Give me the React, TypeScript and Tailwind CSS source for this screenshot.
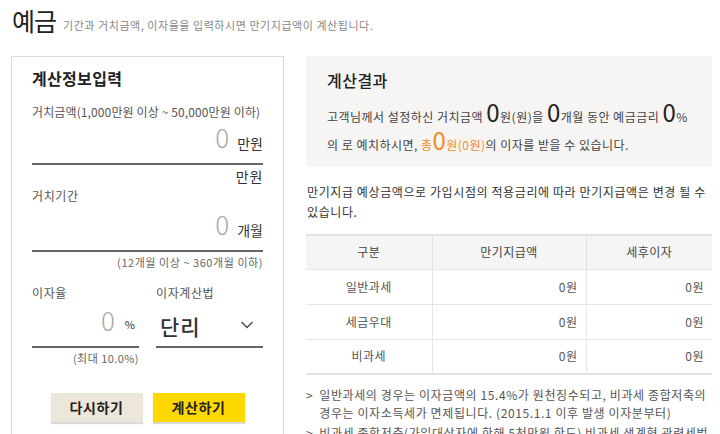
import { ChevronDown } from "lucide-react";

const font = { fontFamily: '"Noto Sans CJK KR", "Noto Sans", sans-serif' };

const rows = [
  { name: "일반과세", total: "0원", interest: "0원" },
  { name: "세금우대", total: "0원", interest: "0원" },
  { name: "비과세", total: "0원", interest: "0원" },
];

function AmountField({ unit, value = "0" }: { unit: string; value?: string }) {
  return (
    <div className="flex h-[45px] items-end justify-end gap-2 border-b-2 border-[#666] pb-[13px]">
      <span className="text-[26px] leading-none font-light text-[#aaa]">{value}</span>
      <span className="text-[14px] leading-none text-[#333]">{unit}</span>
    </div>
  );
}

export default function App() {
  return (
    <main className="min-h-screen bg-white text-[#333]" style={font}>
      <header className="flex items-end gap-[7px] px-[12px] pt-[4px]">
        <h1 className="text-[25px] leading-[32px] font-normal tracking-[-0.04em] text-[#222]">예금</h1>
        <p className="pb-[5px] text-[11px] leading-none tracking-[0.05em] text-[#888]">
          기간과 거치금액, 이자율을 입력하시면 만기지급액이 계산됩니다.
        </p>
      </header>

      <div className="mt-[20px] flex gap-[22px] pl-[11px] pr-[8px]">
        {/* 입력 */}
        <section className="w-[273px] shrink-0 border border-[#ddd] px-[20px] pt-[9px] pb-[20px]">
          <h2 className="text-[16px] leading-[24px] font-bold tracking-[0.02em] text-[#222]">계산정보입력</h2>

          <p className="mt-[14px] whitespace-nowrap text-[12px] leading-[16px] tracking-[0.01em] text-[#555]">
            거치금액(1,000만원 이상 ~ 50,000만원 이하)
          </p>
          <AmountField unit="만원" />
          <p className="mt-[3px] text-right text-[14px] leading-[16px] tracking-[0.05em] text-[#333]">만원</p>

          <p className="mt-[4px] text-[12px] leading-[16px] tracking-[0.05em] text-[#555]">거치기간</p>
          <div className="mt-[3px]">
            <AmountField unit="개월" />
          </div>
          <p className="mt-[3px] text-right text-[11px] leading-[14px] tracking-[0.05em] text-[#666]">
            (12개월 이상 ~ 360개월 이하)
          </p>

          <div className="mt-[16px] grid grid-cols-[107px_107px] justify-between">
            <div>
              <p className="text-[12px] leading-[16px] tracking-[0.05em] text-[#555]">이자율</p>
              <div className="mt-[4px] flex h-[43px] items-end justify-end gap-[10px] border-b-2 border-[#666] pb-[13px] pr-[4px]">
                <span className="text-[26px] leading-none font-light text-[#aaa]">0</span>
                <span className="pb-[3px] text-[11px] leading-none text-[#333]">%</span>
              </div>
              <p className="mt-[3px] text-right text-[11px] leading-[14px] tracking-[0.04em] text-[#666]">(최대 10.0%)</p>
            </div>
            <div>
              <p className="text-[12px] leading-[16px] tracking-[0.05em] text-[#555]">이자계산법</p>
              <div className="mt-[4px] flex h-[43px] items-end justify-between border-b-2 border-[#666] pb-[9px] pl-[4px] pr-[6px]">
                <span className="text-[21px] leading-none font-medium tracking-[0.04em] text-[#333]">단리</span>
                <ChevronDown className="mb-[2px] h-[20px] w-[20px] text-[#555]" strokeWidth={2} />
              </div>
            </div>
          </div>

          <div className="mt-[28px] flex justify-center gap-[10px]">
            <button className="h-[29px] w-[92px] bg-[#ede6da] text-[14px] font-bold tracking-[0.04em] text-[#222] shadow-[0_2px_1px_rgba(0,0,0,0.15)]">
              다시하기
            </button>
            <button className="h-[29px] w-[92px] bg-[#ffd800] text-[14px] font-bold tracking-[0.04em] text-[#222] shadow-[0_2px_1px_rgba(0,0,0,0.15)]">
              계산하기
            </button>
          </div>
        </section>

        {/* 결과 */}
        <section className="w-[406px] shrink-0">
          <div className="h-[111px] bg-[#f7f5f3] px-[21px] pt-[12px]">
            <h2 className="text-[16px] leading-[24px] font-medium tracking-[0.03em] text-[#222]">계산결과</h2>
            <p className="mt-[11px] whitespace-nowrap text-[12px] leading-[28px] tracking-[0.04em] text-[#444]">
              고객님께서 설정하신 거치금액 <span className="text-[24px] leading-[0] text-[#222]">0</span>원(원)을{" "}
              <span className="text-[24px] leading-[0] text-[#222]">0</span>개월 동안 예금금리{" "}
              <span className="text-[24px] leading-[0] text-[#222]">0</span>%
              <br />의 로 예치하시면,{" "}
              <span className="text-[#f08b27]">
                총<span className="text-[24px] leading-[0]">0</span>원(0원)
              </span>
              의 이자를 받을 수 있습니다.
            </p>
          </div>

          <p className="mt-[15px] pl-[1px] text-[12px] leading-[20px] tracking-[0.05em] text-[#333]">
            만기지급 예상금액으로 가입시점의 적용금리에 따라 만기지급액은 변경 될 수 있습니다.
          </p>

          <table className="mt-[12px] w-full table-fixed border-collapse border-y-2 border-[#e3e3e3] text-[12px] tracking-[0.04em]">
            <colgroup>
              <col className="w-[126px]" />
              <col className="w-[154px]" />
              <col className="w-[126px]" />
            </colgroup>
            <thead>
              <tr className="h-[34px] bg-[#f5f5f5] text-[#444]">
                <th className="font-normal">구분</th>
                <th className="border-l border-[#e3e3e3] font-normal">만기지급액</th>
                <th className="border-l border-[#e3e3e3] font-normal">세후이자</th>
              </tr>
            </thead>
            <tbody>
              {rows.map((row) => (
                <tr key={row.name} className="h-[35px] border-t border-[#e6e6e6] text-[#555]">
                  <td className="text-center">{row.name}</td>
                  <td className="border-l border-[#e6e6e6] pr-[8px] text-right">{row.total}</td>
                  <td className="border-l border-[#e6e6e6] pr-[8px] text-right">{row.interest}</td>
                </tr>
              ))}
            </tbody>
          </table>

          <ul className="mt-[11px] space-y-[2px] text-[12px] leading-[18px] tracking-[0.05em] text-[#555]">
            <li className="flex gap-[6px]">
              <span className="shrink-0">&gt;</span>
              <span>
                일반과세의 경우는 이자금액의 15.4%가 원천징수되고, 비과세 종합저축의 경우는 이자소득세가 면제됩니다. (2015.1.1 이후 발생 이자분부터)
              </span>
            </li>
            <li className="flex gap-[6px]">
              <span className="shrink-0">&gt;</span>
              <span className="whitespace-nowrap">
                비과세 종합저축(가입대상자에 한해 5천만원 한도) 비과세 생계형 관련세법
              </span>
            </li>
          </ul>
        </section>
      </div>
    </main>
  );
}
